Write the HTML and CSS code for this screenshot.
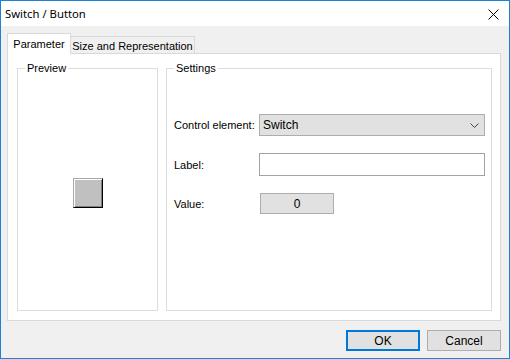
FILE: index.html
```html
<!DOCTYPE html>
<html>
<head>
<meta charset="utf-8">
<link rel="stylesheet" href="styles.css">
</head>
<body>
<div class="window">
  <div class="titlebar">
    <span class="title">Switch / Button</span>
    <svg class="close" width="11" height="11" viewBox="0 0 11 11"><path d="M0.5 0.5L10.5 10.5M10.5 0.5L0.5 10.5" stroke="#000" stroke-width="1" fill="none"/></svg>
  </div>
  <div class="content">
    <div class="tabs">
      <div class="tab active">Parameter</div>
      <div class="tab">Size and Representation</div>
    </div>
    <div class="panel">
      <div class="group preview">
        <span class="legend">Preview</span>
        <div class="swbtn"></div>
      </div>
      <div class="group settings">
        <span class="legend">Settings</span>
        <div class="row">
          <span class="lbl">Control element:</span>
          <div class="combo"><span>Switch</span>
            <svg width="9" height="5" viewBox="0 0 9 5"><path d="M0.5 0.5L4.5 4.5L8.5 0.5" stroke="#444" stroke-width="1" fill="none"/></svg>
          </div>
        </div>
        <div class="row r2">
          <span class="lbl">Label:</span>
          <div class="input"></div>
        </div>
        <div class="row r3">
          <span class="lbl">Value:</span>
          <div class="value">0</div>
        </div>
      </div>
    </div>
    <div class="buttons">
      <div class="btn default">OK</div>
      <div class="btn">Cancel</div>
    </div>
  </div>
</div>
</body>
</html>
```
FILE: styles.css
```css
* { box-sizing: border-box; }
html, body { margin: 0; padding: 0; }
body {
  width: 510px; height: 359px; overflow: hidden;
  font-family: "Liberation Sans", Arial, sans-serif;
  font-size: 11px; color: #000;
}
.window {
  width: 510px; height: 359px;
  border: 1px solid #1883d7;
  background: #f0f0f0;
  display: flex; flex-direction: column;
}
.titlebar {
  height: 25px; background: #fff;
  display: flex; align-items: center; justify-content: space-between;
  padding: 0 10px 0 4px;
}
.title { font-family: "Noto Sans", "Open Sans", sans-serif; font-size: 11.3px; color: #000; }
.close { margin-top: 1px; }
.content { padding: 7px 8px 7px 6px; display: flex; flex-direction: column; }
.tabs { display: flex; align-items: flex-end; height: 20px; }
.tab {
  height: 17px; width: 124px;
  border: 1px solid #d9d9d9; border-bottom: none; border-left: none;
  background: #f0f0f0;
  display: flex; align-items: center; justify-content: center;
  padding-top: 1px;
}
.tab.active {
  width: 64px; height: 21px; margin-bottom: -1px;
  border-left: 1px solid #d9d9d9;
  background: #fff; position: relative; z-index: 1;
  padding-top: 0; padding-bottom: 1px;
}
.panel {
  height: 268px;
  border: 1px solid #d9d9d9; background: #fff;
  padding: 14px 7px 9px 9px;
  display: flex; gap: 8px;
}
.group {
  border: 1px solid #dcdcdc; position: relative; height: 243px;
}
.legend {
  position: absolute; top: -8px; left: 7px;
  background: #fff; padding: 0 2px; line-height: 14px;
}
.preview { width: 141px; display: flex; justify-content: center; padding-top: 109px; }
.swbtn {
  width: 30px; height: 30px; background: #c0c0c0;
  border-top: 1px solid #a8a8a8; border-left: 1px solid #a8a8a8;
  border-right: 1px solid #000; border-bottom: 1px solid #000;
  box-shadow: inset 1px 1px 0 #fff, inset -1px -1px 0 #808080;
}
.settings { width: 326px; padding: 45px 0 0 7px; }
.row { display: flex; align-items: center; }
.lbl { width: 85px; }
.r2 { margin-top: 17px; }
.r3 { margin-top: 17px; }
.combo {
  width: 226px; height: 22px; background: #e1e1e1; border: 1px solid #adadad;
  display: flex; align-items: center; justify-content: space-between;
  padding: 0 5px 0 3px; font-size: 12px;
}
.input { width: 226px; height: 23px; background: #fff; border: 1px solid #a3a3a3; }
.value {
  width: 74px; height: 21px; margin-left: 1px; background: #e1e1e1; border: 1px solid #adadad;
  display: flex; align-items: center; justify-content: center; font-size: 12px;
}
.buttons { display: flex; justify-content: flex-end; gap: 7px; margin-top: 9px; padding-right: 0; }
.btn {
  width: 74px; height: 21px; background: #e1e1e1; border: 1px solid #adadad;
  display: flex; align-items: center; justify-content: center; font-size: 12px;
}
.btn.default { border: 2px solid #0078d7; }
```
